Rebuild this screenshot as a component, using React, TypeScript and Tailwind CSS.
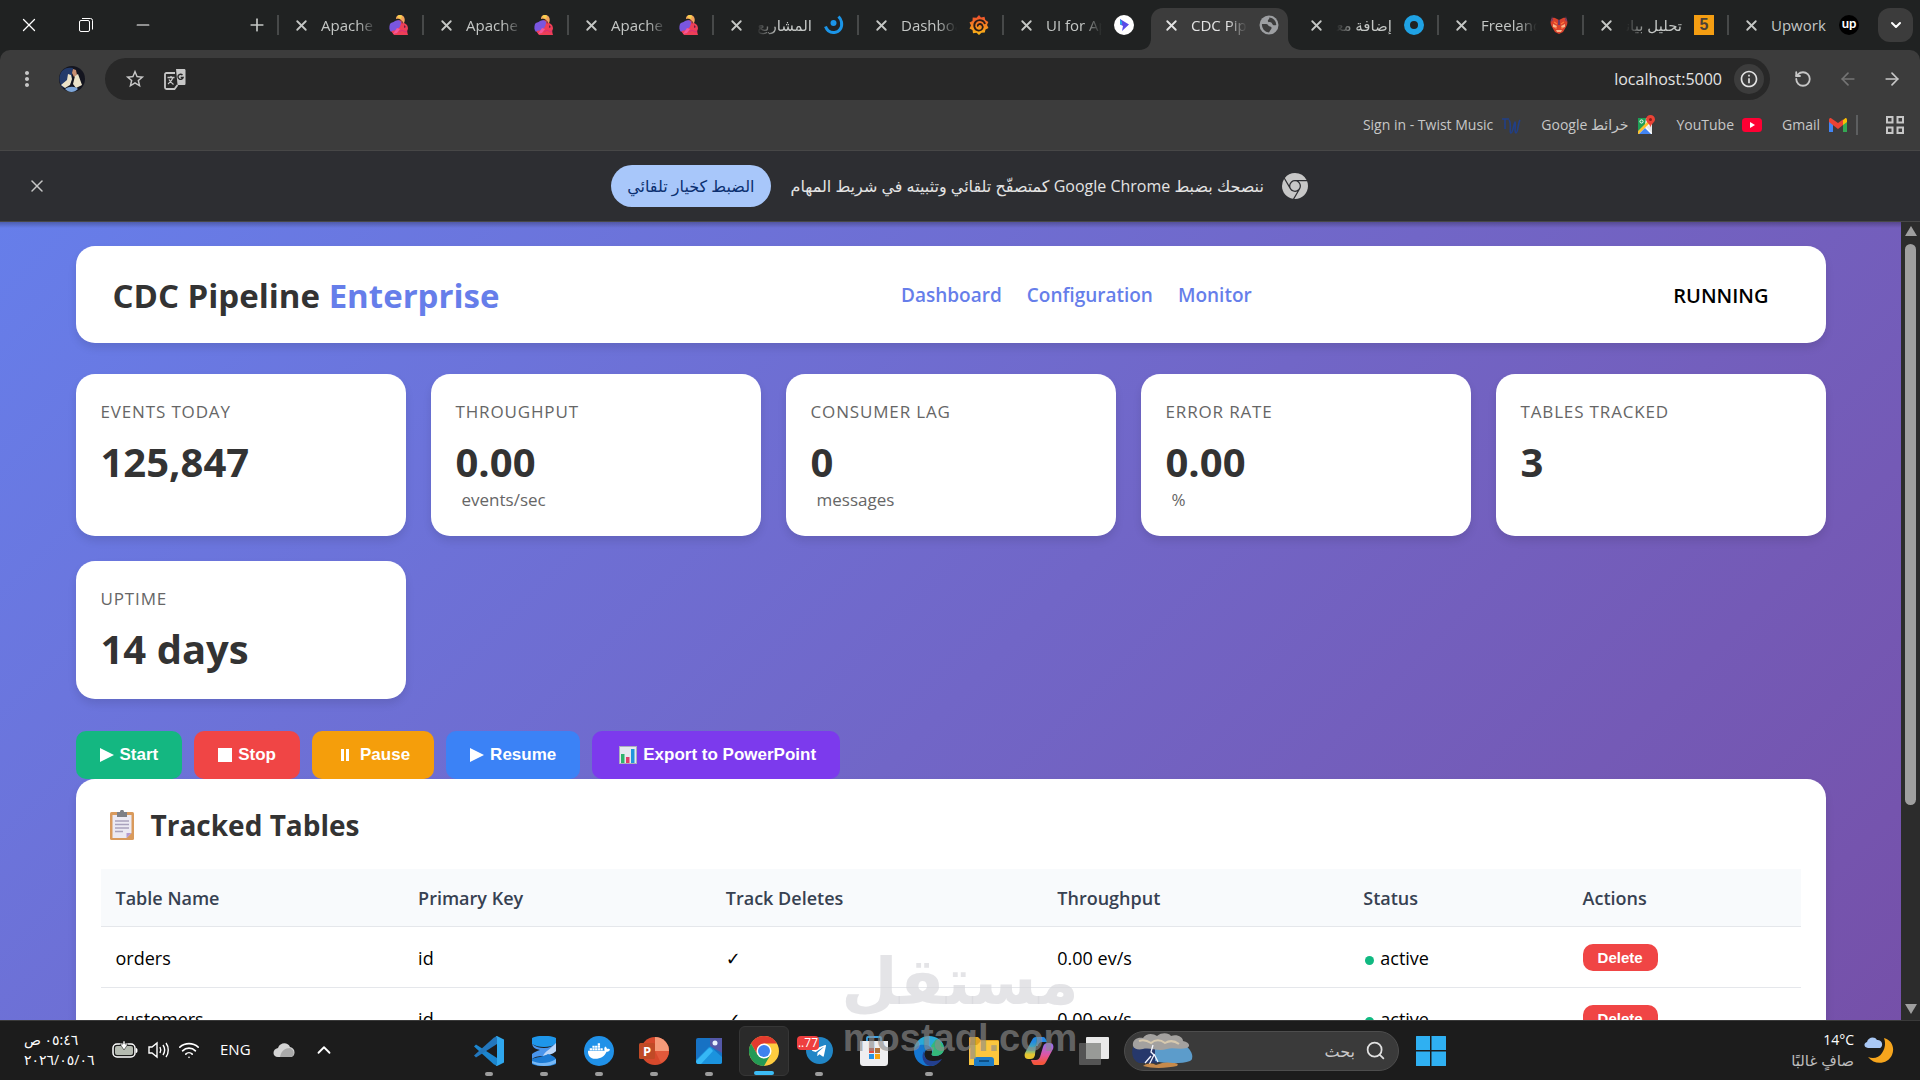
import type { ReactNode } from 'react'
import { ArrowLeft, ArrowRight, ChevronDown, ChevronUp, Minus, Plus, RotateCcw, Search, Wifi, X } from 'lucide-react'
import { FaDocker, FaTelegramPlane } from 'react-icons/fa'
import { MdInfoOutline, MdMoreVert, MdStarBorder } from 'react-icons/md'
import { SiGooglechrome } from 'react-icons/si'

/* ---------- favicons ---------- */

function ApacheIcon() {
  return (
    <svg viewBox="0 0 20 20" className="size-5">
      <path d="M8 6c3-2 6 0 7 2 3 1 4 3 4 6-1 1-1 3 0 6H5l-3-4c0-5 2-8 6-10z" fill="#ee3f57" />
      <path d="M1 9c1-2 3-1 5-3 2-1 5-1 6 1 0 4-2 7-5 8-2 1-4 0-5 2-2-2-2-5-1-8z" fill="#7a56e0" />
      <path d="M7 3c1-4 6-4 8-1 1 2 1 4 0 6l-3-1c1-2-1-4-5-3z" fill="#f2a35c" />
      <path d="M8 2c2-3 4-2 5-1l-1 3z" fill="#f6d04d" />
      <path d="M4 19l4-6 3 1-3 4z" fill="#f4569b" />
      <path d="M12 5l2 2-1 2zM15 10l2 2-2 1z" fill="#6b1f42" />
      <path d="M10 17l3-2 3 2 2-1" fill="none" stroke="#d92d7c" />
    </svg>
  )
}

function MostaqlIcon() {
  return (
    <svg viewBox="0 0 20 20" className="size-5" fill="none" stroke="#1b95e8" strokeWidth="3">
      <circle cx="9.500" cy="8" r="3" fill="#1b95e8" stroke="none" />
      <path d="M1.500 11.500c1.500 4 5 6.500 9 6 5-.5 8-5 7-10.500-.5-2.500-1.500-4-3-5.500" />
    </svg>
  )
}

function GrafanaIcon() {
  return (
    <svg viewBox="0 0 20 20" className="size-5">
      <defs>
        <linearGradient id="grafana" x1="0" y1="0" x2="0" y2="1">
          <stop offset="0" stopColor="#ee4a2e" />
          <stop offset="1" stopColor="#f9b716" />
        </linearGradient>
      </defs>
      <path d="M10 0l2 2.500 3.500-.8.800 3.300 3 2-1.300 3 1.500 3-3 1.500-.7 3-3.300.2L10 20l-2.500-2.200-3.500.5-.5-3.300-3-1.500L2 10.500.5 7.500 3.500 6l.2-3.500 3.800.2z" fill="url(#grafana)" />
      <path d="M16 9c-1-4-6-5-9-2.500-3 3-2 8 2 9 4 .5 6-3 4-5.500-2-2-5-.5-4 1.500" fill="none" stroke="#2a1c18" strokeWidth="1.800" />
    </svg>
  )
}

function ApiIcon() {
  return (
    <svg viewBox="0 0 20 20" className="size-5">
      <circle cx="10" cy="10" r="10" fill="#fff" />
      <path d="M6 4l9 5.500L8 16l1-5-3-1.500z" fill="#5a4de8" />
      <path d="M6 4l2 3v3l-2-1z" fill="#2aa8e8" />
    </svg>
  )
}

function GlobeIcon() {
  return (
    <svg viewBox="0 0 20 20" className="size-5">
      <circle cx="10" cy="10" r="9.500" fill="#9d9fa2" />
      <path d="M3 9h4c2 0 2 2 4 2.500 2 .5 2 2 .5 3.500L10 17.500A7.500 7.500 0 0 1 3 9zM10 2.500c1.500 1.500-2 2-1 4 1 1.500 3 0 4 2s2 2 4.300 1.500A7.500 7.500 0 0 0 10 2.500z" fill="#3c3c3c" />
    </svg>
  )
}

function RingIcon() {
  return (
    <svg viewBox="0 0 20 20" className="size-5">
      <circle cx="10" cy="10" r="7" fill="#202222" stroke="#1fa2e4" strokeWidth="6" />
    </svg>
  )
}

function MaskIcon() {
  return (
    <svg viewBox="0 0 20 20" className="size-5">
      <path d="M2 5c1-3 3-2 4-2l4 2 4-2c1 0 3-1 4 2 1 3 0 5-1 7l-3 5-4 2-4-2-3-5C2 10 1 8 2 5z" fill="#d9412c" />
      <path d="M4 9l4 2-1 2-3-1zM16 9l-4 2 1 2 3-1zM7 15h6l-1 2H8z" fill="#f8b68a" />
      <path d="M3 1l1 4-2 2zM17 1l-1 4 2 2zM9 5h2v5H9z" fill="#6b3a6e" />
      <path d="M5 7l3 2M15 7l-3 2M7 12v2M13 12v2" stroke="#ff7a3c" strokeWidth="1.200" />
    </svg>
  )
}

function FiveIcon() {
  return (
    <span className="flex size-5 items-center justify-center bg-[#f59e12] font-['Liberation_Sans'] text-base font-bold text-[#4a4038]">5</span>
  )
}

function UpworkIcon() {
  return (
    <span className="flex size-5 items-center justify-center rounded-full bg-black pb-0.5 font-['Lato'] text-[13px] font-bold text-white">up</span>
  )
}

/* ---------- bookmarks ---------- */

function TwistIcon() {
  return (
    <svg viewBox="0 0 20 20" className="size-5" fill="none" stroke="#213f86" strokeWidth="1.600">
      <path d="M1 4h7M4 4v10M8 5c3 4 0 13 2 13s3-11 4-11-1 11 1 11 2-10 4-13" />
    </svg>
  )
}

function MapsIcon() {
  return (
    <svg viewBox="0 0 20 20" className="size-5">
      <path d="M2 3h14v16H2z" fill="#fff" />
      <path d="M2 3h8l-1 7-7 7z" fill="#1e9e55" />
      <path d="M2 16L13 5l2 2L3 19H2z" fill="#fbc02d" />
      <path d="M3 19l6-6 6 6z" fill="#4285f4" />
      <path d="M10 12l6 6V9z" fill="#e6e8ea" />
      <circle cx="5.500" cy="6.500" r="1.600" fill="none" stroke="#fff" />
      <path d="M14.500 0a4.500 4.500 0 0 1 4.500 4.500c0 3-4 4-4.500 8-.5-4-4.500-5-4.500-8A4.500 4.500 0 0 1 14.500 0z" fill="#ea4335" />
      <circle cx="14.500" cy="4.500" r="1.500" fill="#8c1d18" />
    </svg>
  )
}

function YouTubeIcon() {
  return (
    <svg viewBox="0 0 20 20" className="size-5">
      <rect y="3" width="20" height="14" rx="3.500" fill="#ff0033" />
      <path d="M8 7l5 3-5 3z" fill="#fff" />
    </svg>
  )
}

function GmailIcon() {
  return (
    <svg viewBox="0 0 20 20" className="size-5">
      <path d="M1 5v12h4V8z" fill="#4285f4" />
      <path d="M19 5v12h-4V8z" fill="#34a853" />
      <path d="M15 5l2-1.500c1-1 2 0 2 1.500v2l-4 3z" fill="#fbbc04" />
      <path d="M1 7V5c0-1.500 1-2.500 2.500-1.500L10 8l5-3.500V10l-5 4z" fill="#ea4335" />
    </svg>
  )
}

/* ---------- taskbar icons ---------- */

function VsCodeIcon() {
  return (
    <svg viewBox="0 0 30 30" className="size-[30px]">
      <path d="M2 8.500L0 10.500l20 18 3 1V22z" fill="#1c86cf" />
      <path d="M2 21.500L0 19.500 20 1.500l3-1V8z" fill="#2377bd" />
      <path d="M21 .5l2-.5 7 3.500v23L23 30l-2-.5c1 0 2-.5 2-2v-25c0-1.500-1-2-2-2z" fill="#2fa7ee" />
    </svg>
  )
}

function RibbonIcon() {
  return (
    <svg viewBox="0 0 30 30" className="size-[30px]">
      <path d="M3 2c6-3 18-3 24 0v6c-6 4-18 4-24 0z" fill="#1e96ea" />
      <path d="M3 8c4 3 8 4 12 4 5 0 9-2 12-5v8c-3 3-8 4-13 5-5 0-9 1-11 3v-5c2-2 5-3 8-4-4-1-7-2-8-6z" fill="#4a95ec" />
      <path d="M27 7v8c-3 3-7 4-13 5 2-5 8-7 13-13z" fill="#bcd6f8" />
      <path d="M3 23c5-2 11-2 16-5 4 1 7 3 8 5v5c-6 3-18 3-24 0z" fill="#1c7bd4" />
      <path d="M3 25c7 3 17 3 24-2v4c-6 4-18 4-24 0z" fill="#76b7f5" />
    </svg>
  )
}

function DockerIcon() {
  return (
    <span className="flex size-[30px] items-center justify-center rounded-full bg-[#2091e8] text-white">
      <FaDocker size={22} />
    </span>
  )
}

function PowerPointIcon() {
  return (
    <span className="relative block size-[30px]">
      <svg viewBox="0 0 30 30" className="size-[30px]">
        <circle cx="16" cy="15" r="14" fill="#d6492c" />
        <path d="M16 1a14 14 0 0 1 14 14H16z" fill="#f59a79" />
        <path d="M16 15h14a14 14 0 0 1-8 12z" fill="#e2583a" />
        <rect y="7" width="16" height="16" rx="1.500" fill="#c04a26" />
      </svg>
      <span className="absolute top-[7px] left-0 w-4 text-center font-['Open_Sans'] text-[13px] leading-4 font-bold text-white">P</span>
    </span>
  )
}

function PhotosIcon() {
  return (
    <svg viewBox="0 0 30 30" className="size-[30px]">
      <rect x="2" y="2" width="26" height="26" rx="2" fill="#1772c4" />
      <path d="M16 2h12v15L16 10z" fill="#5458a8" />
      <path d="M2 24L14 12c2-2 3-1 4 0l10 9v5c0 1-1 2-2 2H6z" fill="#1b93de" />
      <path d="M2 25L14 13c2-2 3-1 5 2L7 28H4c-1 0-2-1-2-3z" fill="#36b8f6" />
      <circle cx="21" cy="7" r="2.500" fill="#e9f2fb" />
    </svg>
  )
}

function ChromeIcon() {
  return (
    <svg viewBox="0 0 30 30" className="size-[30px]">
      <circle cx="15" cy="15" r="15" fill="#ffcd40" />
      <path d="M2 7.500A15 15 0 0 1 28 7.500H15L8.500 18.700z" fill="#e33b2e" />
      <path d="M2 7.500A15 15 0 0 0 15 30l6.500-11.200H8.500z" fill="#249a55" />
      <circle cx="15" cy="15" r="7.500" fill="#fff" />
      <circle cx="15" cy="15" r="6" fill="#3d82ee" />
    </svg>
  )
}

function TelegramIcon() {
  return (
    <span className="relative flex size-[30px] items-center justify-center">
      <span className="flex size-[27px] items-center justify-center rounded-full bg-[#2186c6] text-white">
        <FaTelegramPlane size={16} />
      </span>
      <span className="absolute top-0 right-[15px] rounded bg-[#ee3f3f] px-px font-['Open_Sans'] text-xs leading-3.5 text-white">..77</span>
    </span>
  )
}

function StoreIcon() {
  return (
    <svg viewBox="0 0 30 30" className="size-[30px]">
      <path d="M8 6V2c0-1 0-1 1-1h12c1 0 1 0 1 1v4" fill="none" stroke="#3ba4e6" strokeWidth="1.800" />
      <path d="M1 5h28v21c0 3-1 4-4 4H5c-3 0-4-1-4-4z" fill="#eeeef0" />
      <path d="M10 12h5v5h-5z" fill="#e25041" />
      <path d="M16 12h5v5h-5z" fill="#b0713a" />
      <path d="M10 18h5v5h-5z" fill="#2694e4" />
      <path d="M16 18h5v5h-5z" fill="#f8a50e" />
    </svg>
  )
}

function EdgeIcon() {
  return (
    <svg viewBox="0 0 30 30" className="size-[30px]">
      <path d="M0 15C0 6 7 0 15 0s15 5 15 12c0 5-4 8-9 8-3 0-4-1-3-3 1-6-5-9-10-7-4 1-7 3-8 5z" fill="#2aa9d8" />
      <path d="M22 3c5 2 8 6 8 10 0 4-4 7-9 7-3 0-4-1-3-3 2-3 0-5-1-7z" fill="#35b979" />
      <path d="M0 15c1-5 6-7 11-6 3 0 5 2 6 4-5-1-8 4-6 8 2 5 7 8 12 7-3 2-6 2-9 2C6 30 0 23 0 15z" fill="#1577d2" />
      <path d="M11 14c-3 5 1 12 9 11 3 0 5-1 8-2-3 5-8 7-12 7-7-1-10-11-5-16z" fill="#233f8f" />
    </svg>
  )
}

function FolderIcon() {
  return (
    <svg viewBox="0 0 30 30" className="size-[30px]">
      <path d="M0 2c0-1 1-1 1-1h8l3 3h17c1 0 1 1 1 2v8H0z" fill="#e2a321" />
      <path d="M0 9h8l4-4h17c1 0 1 1 1 2v22H0z" fill="#fbc63e" />
      <path d="M5 30v-6c0-2 1-3 3-3h14c2 0 3 1 3 3v6z" fill="#1d7bc4" />
      <path d="M10 25h10" stroke="#0c4f86" strokeWidth="2" />
    </svg>
  )
}

function CopilotIcon() {
  return (
    <svg viewBox="0 0 30 30" className="size-[30px]">
      <defs>
        <linearGradient id="copilotLeft" x1="0" y1="0" x2="0" y2="1">
          <stop offset="0.200" stopColor="#2188e6" />
          <stop offset="0.550" stopColor="#4fb0a8" />
          <stop offset="0.800" stopColor="#e6c62f" />
        </linearGradient>
        <linearGradient id="copilotRight" x1="0" y1="0" x2="0" y2="1">
          <stop offset="0.100" stopColor="#9d6be8" />
          <stop offset="0.550" stopColor="#e0569f" />
          <stop offset="0.900" stopColor="#f4553c" />
        </linearGradient>
      </defs>
      <path d="M8 4c1-2 2-3 4-3h7c2 0 3 2 4 5h-5c-2 0-3 1-4 3l-3 10c-1 3-2 4-5 4H4c-3 0-4-3-3-6z" fill="url(#copilotLeft)" />
      <path d="M22 26c-1 2-2 3-4 3h-7c-2 0-3-2-4-5h5c2 0 3-1 4-3l3-10c1-3 2-4 5-4h2c3 0 4 3 3 6z" fill="url(#copilotRight)" />
      <path d="M12 10h6l-2 9h-5z" fill="#1c1c1c" />
    </svg>
  )
}

function TaskViewIcon() {
  return (
    <svg viewBox="0 0 30 30" className="size-[30px]">
      <rect x="7" y="1" width="23" height="22" rx="1" fill="#e9e9e9" />
      <rect y="7" width="22" height="22" rx="1" fill="#545454" />
      <path d="M7 7h15v16H7z" fill="#989a97" />
    </svg>
  )
}

function WindowsIcon() {
  return (
    <svg viewBox="0 0 30 30" className="size-[30px]" fill="#2fb0f2">
      <path d="M0 1c0-1 0-1 1-1h13v14H0zM15.500 0H29c1 0 1 0 1 1v13H15.500zM0 15.500h14V30H1c-1 0-1 0-1-1zM15.500 15.500H30V29c0 1 0 1-1 1H15.500z" />
    </svg>
  )
}

function StormImage() {
  return (
    <svg viewBox="0 0 62 36" className="h-9 w-[62px]">
      <path d="M3 12h24v18H8C2 28-1 20 3 12z" fill="#26386b" />
      <path d="M24 12h30c8 6 9 14 5 16-8 3-24 3-35 0z" fill="#5c9ccb" />
      <path d="M2 13C1 7 6 4 12 5c3-5 10-5 14-2 5-4 12-3 14 0 6-2 12 1 12 5 6 1 8 5 4 7-8 2-14-1-20 1-9 3-17-2-24 0-5 1-9 0-10-3z" fill="#a3a19f" />
      <path d="M8 8c5-2 9 0 12 2 5-4 10-3 14 0 5-3 10-2 14 1" fill="none" stroke="#d7c9ae" strokeWidth="2" />
      <path d="M22 12l-2 7 3 3-5 10M23 21l4 8M20 23l-6 7" fill="none" stroke="#f4f6ff" strokeWidth="1.300" />
      <path d="M12 33c5-3 9-3 13-1 7-3 12-3 17-2 4 0 6 1 4 3-9 2-24 3-34 0z" fill="#c68a4b" />
    </svg>
  )
}

function MoonIcon() {
  return (
    <svg viewBox="0 0 30 30" className="size-[30px]">
      <path d="M20 3c8 2 11 10 8 17-4 9-17 11-24 2 5 2 11 1 14-4 3-4 4-10 2-15z" fill="#f6a51d" />
      <path d="M4 13c-4 0-5-5-1-6 1-5 8-6 10-2 5-1 7 6 3 8z" fill="#a9c8f5" />
    </svg>
  )
}

/* ---------- data ---------- */

type Tab = { title: string; icon: ReactNode; rtl?: boolean; active?: boolean; divider?: boolean }

const tabs: Tab[] = [
  { title: 'Apache Kafka', icon: <ApacheIcon />, divider: true },
  { title: 'Apache Kafka', icon: <ApacheIcon />, divider: true },
  { title: 'Apache Kafka', icon: <ApacheIcon />, divider: true },
  { title: 'المشاريع', icon: <MostaqlIcon />, rtl: true, divider: true },
  { title: 'Dashboards', icon: <GrafanaIcon />, divider: true },
  { title: 'UI for Apache', icon: <ApiIcon />, divider: true },
  { title: 'CDC Pipeline', icon: <GlobeIcon />, active: true },
  { title: 'إضافة معرض', icon: <RingIcon />, rtl: true },
  { title: 'Freelancer', icon: <MaskIcon />, divider: true },
  { title: 'تحليل بيانات', icon: <FiveIcon />, rtl: true, divider: true },
  { title: 'Upwork', icon: <UpworkIcon />, divider: true },
]

const bookmarks = [
  { label: 'Sign in - Twist Music', icon: <TwistIcon /> },
  { label: 'Google خرائط', icon: <MapsIcon /> },
  { label: 'YouTube', icon: <YouTubeIcon /> },
  { label: 'Gmail', icon: <GmailIcon /> },
]

const stats = [
  { label: 'Events Today', value: '125,847' },
  { label: 'Throughput', value: '0.00', unit: 'events/sec' },
  { label: 'Consumer Lag', value: '0', unit: 'messages' },
  { label: 'Error Rate', value: '0.00', unit: '%' },
  { label: 'Tables Tracked', value: '3' },
  { label: 'Uptime', value: '14 days' },
]

const columns = [
  { title: 'Table Name', width: 'w-[17.8%]' },
  { title: 'Primary Key', width: 'w-[18.1%]' },
  { title: 'Track Deletes', width: 'w-[19.5%]' },
  { title: 'Throughput', width: 'w-[18%]' },
  { title: 'Status', width: 'w-[12.9%]' },
  { title: 'Actions', width: 'w-[13.7%]' },
]

const rows = ['orders', 'customers']

const apps = [
  { name: 'Visual Studio Code', icon: <VsCodeIcon />, open: true },
  { name: 'Database', icon: <RibbonIcon />, open: true },
  { name: 'Docker', icon: <DockerIcon />, open: true },
  { name: 'PowerPoint', icon: <PowerPointIcon />, open: true },
  { name: 'Photos', icon: <PhotosIcon />, open: true },
  { name: 'Chrome', icon: <ChromeIcon />, open: true, active: true },
  { name: 'Telegram', icon: <TelegramIcon />, open: true },
  { name: 'Store', icon: <StoreIcon /> },
  { name: 'Edge', icon: <EdgeIcon />, open: true },
  { name: 'Files', icon: <FolderIcon /> },
  { name: 'Copilot', icon: <CopilotIcon /> },
  { name: 'Task view', icon: <TaskViewIcon /> },
]

/* ---------- browser ---------- */

function TabItem({ tab }: { tab: Tab }) {
  return (
    <div className={`relative flex h-[42px] w-[145px] items-center pb-2 ${tab.active ? 'text-[#e3e3e3]' : 'text-[#c4c7c5]'}`}>
      {tab.active && (
        <svg viewBox="0 0 163 42" className="absolute top-0 -left-2 h-[42px] w-[163px]" fill="#3c3c3c">
          <path d="M0 42c8 0 12-5 12-12V12C12 5 17 0 24 0h113c7 0 12 5 12 12v18c0 7 6 12 14 12z" />
        </svg>
      )}
      <span className={`h-5 w-0.5 shrink-0 ${tab.divider ? 'bg-[#474949]' : ''}`} />
      <button aria-label="Close tab" className="relative ml-3 flex size-5 shrink-0 items-center justify-center">
        <X size={17} strokeWidth={2.6} />
      </button>
      <span
        dir={tab.rtl ? 'rtl' : 'ltr'}
        className={`relative ml-2.5 w-14 shrink-0 overflow-hidden whitespace-nowrap text-[15px] leading-6 ${
          tab.rtl
            ? '[mask-image:linear-gradient(to_left,#000_60%,transparent)]'
            : tab.title === 'Upwork' ? '' : '[mask-image:linear-gradient(to_right,#000_65%,transparent)]'
        }`}
      >
        {tab.title}
      </span>
      <span className="relative ml-3 shrink-0">{tab.icon}</span>
    </div>
  )
}

function TabStrip() {
  return (
    <div className="flex h-[50px] items-start bg-[#202222] pt-2 text-white">
      <div className="flex h-[34px] flex-1 items-center">
        <button aria-label="Close" className="flex w-[57px] items-center justify-center"><X size={22} strokeWidth={1.4} /></button>
        <button aria-label="Restore" className="flex w-[57px] items-center justify-center">
          <svg viewBox="0 0 14 14" className="size-3.5" fill="none" stroke="currentColor">
            <rect x="0.500" y="2.500" width="10" height="11" rx="1.500" />
            <path d="M3 .5h8.500a2 2 0 0 1 2 2v9" />
          </svg>
        </button>
        <button aria-label="Minimize" className="flex w-[57px] items-center justify-center"><Minus size={20} strokeWidth={1.4} /></button>
        <button aria-label="New tab" className="mr-2 ml-auto flex size-6 items-center justify-center text-[#c4c7c5]"><Plus size={20} /></button>
      </div>
      {tabs.map((tab, i) => <TabItem key={i} tab={tab} />)}
      <button aria-label="Search tabs" className="mr-[7px] ml-1.5 flex h-[34px] w-[35px] items-center justify-center rounded-xl bg-[#3c3c3c]">
        <ChevronDown size={16} strokeWidth={3} />
      </button>
    </div>
  )
}

function TranslateIcon() {
  return (
    <svg viewBox="0 0 22 22" className="size-[22px]">
      <path d="M11 5H2.500C1.500 5 1 5.500 1 6.500v13c0 1 .5 1.500 1.500 1.500h8l3-4" fill="none" stroke="currentColor" strokeWidth="1.800" />
      <path d="M3.500 9.500h7M7 8v1.500M9 9.500c-1 3-3 5-5 6.500M5 11.500c1 2 2.500 3.500 4.500 5" fill="none" stroke="currentColor" strokeWidth="1.300" />
      <path d="M12 1h8c1 0 1.500.5 1.500 1.500v13c0 1-.5 1.500-1.500 1.500h-6.500z" fill="currentColor" />
      <path d="M18.500 7a2.600 2.600 0 1 0 .6 2.500h-2.400" fill="none" stroke="#282828" strokeWidth="1.400" />
    </svg>
  )
}

function Toolbar() {
  return (
    <div className="bg-[#202222]">
      <div className="rounded-t-[10px] bg-[#3c3c3c] text-[#c7c7c7]">
        <div className="flex h-[58px] items-center pr-[18px] pl-[15px]">
          <button aria-label="Menu"><MdMoreVert size={24} /></button>
          <svg viewBox="0 0 26 26" className="ml-5 size-[26px]">
            <circle cx="13" cy="13" r="13" fill="#14151f" />
            <path d="M3 5C-1 10 0 18 4 22l8-6 2-14C9 1 6 2 3 5z" fill="#233a6b" />
            <path d="M14 3l3 1 1 5-3 2-2-4z" fill="#c98f72" />
            <path d="M2 19l6-5 1-6 3 1 1 4-2 6-5 3zM14 18l2-8 3-2 4 11-6 3z" fill="#ece3c9" />
            <path d="M6 23c4-3 10-3 13 0-4 4-9 4-13 0z" fill="#7ea6d8" />
          </svg>
          <div className="ml-5 flex h-[42px] flex-1 items-center rounded-full bg-[#282828] pr-1.5 pl-[19px]">
            <button aria-label="Bookmark"><MdStarBorder size={22} /></button>
            <button aria-label="Translate" className="ml-[18px]"><TranslateIcon /></button>
            <input aria-label="Address" defaultValue="localhost:5000" className="mr-3 min-w-0 flex-1 bg-transparent text-right text-base text-[#e3e3e3]" />
            <button aria-label="Site information" className="flex size-[30px] items-center justify-center rounded-full bg-[#3c3c3c] text-[#e3e3e3]">
              <MdInfoOutline size={20} />
            </button>
          </div>
          <button aria-label="Reload" className="ml-6"><RotateCcw size={18} strokeWidth={2.4} /></button>
          <button aria-label="Back" className="ml-[26px] text-[#747474]"><ArrowLeft size={20} /></button>
          <button aria-label="Forward" className="ml-6"><ArrowRight size={20} /></button>
        </div>
        <div className="flex h-[42px] items-center justify-end gap-5 pr-4 pb-2 text-sm">
          {bookmarks.map((b) => (
            <a key={b.label} href="#" className="flex items-center gap-2">{b.label}{b.icon}</a>
          ))}
          <span className="-ml-3 h-5 w-0.5 bg-[#5d5f60]" />
          <svg viewBox="0 0 18 18" className="ml-2 size-[18px]" fill="none" stroke="currentColor" strokeWidth="2">
            <path d="M1 1h5.500v5.500H1zM11.500 1H17v5.500h-5.500zM1 11.500h5.500V17H1zM11.500 11.500H17V17h-5.500z" />
          </svg>
        </div>
      </div>
    </div>
  )
}

function InfoBar() {
  return (
    <div className="flex h-[72px] items-center border-y border-[#474747] bg-[#2d2e32] text-base text-[#e3e3e3]">
      <button aria-label="Dismiss" className="ml-[27px] text-[#c7c7c7]"><X size={20} strokeWidth={1.8} /></button>
      <div className="flex flex-1 items-center justify-center pr-12">
        <button dir="rtl" className="mr-5 h-[42px] rounded-full bg-[#a8c7fa] px-4 text-[#0b2f70]">الضبط كخيار تلقائي</button>
        <span dir="rtl" className="mr-[18px]">ننصحك بضبط Google Chrome كمتصفّح تلقائي وتثبيته في شريط المهام</span>
        <SiGooglechrome size={26} color="#c7c7c7" />
      </div>
    </div>
  )
}

/* ---------- dashboard ---------- */

function ActionButton({ color, icon, children }: { color: string; icon: ReactNode; children: ReactNode }) {
  return (
    <button className={`flex h-12 items-center gap-1.5 rounded-[10px] px-6 font-['Liberation_Sans'] text-[17px] font-bold text-white ${color}`}>
      {icon}
      {children}
    </button>
  )
}

const playIcon = <svg viewBox="0 0 14 14" className="size-3.5" fill="currentColor"><path d="M0 0l14 7-14 7z" /></svg>
const stopIcon = <svg viewBox="0 0 14 14" className="size-3.5" fill="currentColor"><path d="M0 0h14v14H0z" /></svg>
const pauseIcon = <svg viewBox="0 0 18 14" className="h-3.5 w-[18px]" fill="currentColor"><path d="M5 1h3v12H5zM10 1h3v12h-3z" /></svg>
const chartIcon = (
  <svg viewBox="0 0 21 18" className="h-[18px] w-[21px]">
    <rect x="3.500" y="0.500" width="17" height="17" fill="#e6e9ef" stroke="#aab0bd" />
    <path d="M5 8h3.500v9H5z" fill="#2eb36c" />
    <path d="M10 11h3.500v6H10z" fill="#e03c68" />
    <path d="M15 3h3.500v14H15z" fill="#2194dd" />
  </svg>
)

function ClipboardIcon() {
  return (
    <svg viewBox="0 0 26 30" className="h-[30px] w-[26px]">
      <rect x="1" y="2" width="24" height="28" rx="1.500" fill="#d99a5c" />
      <path d="M3.500 5h19v18l-5 5h-14z" fill="#eceaf3" />
      <path d="M17.500 28v-5h5z" fill="#b59ad0" />
      <path d="M8 2h3c0-3 4-3 4 0h3v5H8z" fill="#7e8086" />
      <path d="M6 11h14M6 14.500h14M6 18h14M6 21.500h8" stroke="#a9a2bd" strokeWidth="1.300" />
    </svg>
  )
}

function Dashboard() {
  return (
    <div className="min-h-[1093px] bg-linear-135 from-[#667eea] to-[#764ba2] pt-6">
      <div className="mx-auto max-w-[1750px]">
        <header className="mb-[31px] flex h-[97px] items-center justify-between rounded-[19px] bg-white px-[37px] pt-0.5 shadow-[0_5px_8px_rgba(0,0,0,0.1)]">
          <h1 className="text-[33px] font-bold text-[#333]">CDC Pipeline <span className="text-[#667eea]">Enterprise</span></h1>
          <nav className="flex gap-[25px] text-[19px] font-semibold text-[#667eea]">
            <a href="#">Dashboard</a>
            <a href="#">Configuration</a>
            <a href="#">Monitor</a>
          </nav>
          <div className="px-5 text-xl font-semibold text-black">RUNNING</div>
        </header>

        <div className="grid grid-cols-5 gap-[25px]">
          {stats.map((s) => (
            <div key={s.label} className="rounded-[19px] bg-white px-[25px] pt-[26px] pb-6 shadow-[0_5px_8px_rgba(0,0,0,0.1)]">
              <div className="text-[17px] leading-6 tracking-wider text-[#666] uppercase">{s.label}</div>
              <div className="mt-3 text-[40px] leading-[52px] font-bold text-[#333]">{s.value}</div>
              {s.unit && <div className="pl-1.5 text-[17px] leading-6 text-[#666]">{s.unit}</div>}
            </div>
          ))}
        </div>

        <div className="mt-8 flex gap-3">
          <ActionButton color="bg-[#14b781]" icon={playIcon}>Start</ActionButton>
          <ActionButton color="bg-[#f04545]" icon={stopIcon}>Stop</ActionButton>
          <ActionButton color="bg-[#f59e0b]" icon={pauseIcon}>Pause</ActionButton>
          <ActionButton color="bg-[#3b82f6]" icon={playIcon}>Resume</ActionButton>
          <ActionButton color="bg-[#7c3aed]" icon={chartIcon}>Export to PowerPoint</ActionButton>
        </div>

        <section className="rounded-[19px] bg-white p-[25px] shadow-[0_5px_8px_rgba(0,0,0,0.1)]">
          <h2 className="mb-6 flex h-[41px] items-center gap-4 pl-2 text-[28px] font-bold text-[#333]">
            <ClipboardIcon />
            Tracked Tables
          </h2>
          <table className="w-full table-fixed text-left text-lg">
            <thead>
              <tr className="h-[57px] border-b border-[#e5e7eb] bg-[#f8fafc] text-[#374151]">
                {columns.map((c) => <th key={c.title} className={`px-[15px] pt-0.5 font-semibold ${c.width}`}>{c.title}</th>)}
              </tr>
            </thead>
            <tbody>
              {rows.map((name) => (
                <tr key={name} className="h-[61px] border-b border-[#e5e7eb] text-black *:px-[15px] *:pt-0.5">
                  <td>{name}</td>
                  <td>id</td>
                  <td>✓</td>
                  <td>0.00 ev/s</td>
                  <td>
                    <span className="mr-1.5 ml-0.5 inline-block size-[9px] rounded-full bg-[#10b981]" />
                    active
                  </td>
                  <td>
                    <button className="flex h-[27px] w-[75px] items-center justify-center rounded-[10px] bg-[#f04545] font-['Liberation_Sans'] text-[15px] font-bold text-white">
                      Delete
                    </button>
                  </td>
                </tr>
              ))}
            </tbody>
          </table>
        </section>
      </div>
    </div>
  )
}

function ScrollBar() {
  return (
    <div className="flex w-[19px] flex-col items-center bg-[#2c2c2c] py-1 text-[#9f9f9f]">
      <svg viewBox="0 0 12 10" className="h-2.5 w-3" fill="currentColor"><path d="M6 0l6 10H0z" /></svg>
      <div className="mt-2 h-[71%] w-[11px] rounded-full bg-[#9f9f9f]" />
      <svg viewBox="0 0 12 10" className="mt-auto mb-0.5 h-2.5 w-3" fill="currentColor"><path d="M6 10L0 0h12z" /></svg>
    </div>
  )
}

/* ---------- desktop ---------- */

function Taskbar() {
  return (
    <footer className="flex h-[60px] shrink-0 items-center border-t border-[#3a3a3a] bg-[#1c1c1c] text-white">
      <div className="flex flex-1 items-center pb-0.5">
        <div className="ml-6 w-[88px] text-sm leading-5">
          <div dir="rtl" className="w-fit">٠٥:٤٦ ص</div>
          <div>٢٠٢٦/٠٥/٠٦</div>
        </div>
        <svg viewBox="0 0 26 18" className="h-[18px] w-[26px]">
          <rect x="1" y="3" width="22" height="13" rx="4" fill="#1c1c1c" stroke="#fff" strokeWidth="1.500" />
          <rect x="3" y="5" width="18" height="9" rx="2" fill="#b4bab0" />
          <path d="M24 7c2 0 2 5 0 5z" fill="#fff" />
          <path d="M11 0h2v3h3l-4 6-4-6h3z" fill="#fff" stroke="#1c1c1c" strokeWidth="0.600" />
        </svg>
        <svg viewBox="0 0 22 18" className="ml-2.5 h-[18px] w-[22px]" fill="none" stroke="#fff" strokeWidth="1.400">
          <path d="M1 6h3l5-4v14l-5-4H1zM12 6c1 2 1 4 0 6M15 4c2 3 2 7 0 10M18 2c3 4 3 10 0 14" />
        </svg>
        <Wifi size={22} strokeWidth={1.8} className="ml-2" />
        <span className="ml-5 text-[15px]">ENG</span>
        <svg viewBox="0 0 22 14" className="ml-[22px] h-3.5 w-[22px]">
          <path d="M5 14C-1 14-1 6 5 5c2-6 10-6 12-1 6 1 6 10 0 10z" fill="#d4d4d4" />
          <path d="M7 14c1-6 5-9 10-9 5 2 5 9 0 9z" fill="#a9a9a9" />
        </svg>
        <ChevronUp size={22} className="ml-[18px]" />
      </div>

      <div className="ml-4 flex items-center gap-[5px]">
        {apps.map((a) => (
          <button
            key={a.name}
            aria-label={a.name}
            className={`relative flex size-[50px] items-center justify-center rounded-md ${a.active ? 'border border-[#363636] bg-[#2a2a2a]' : ''}`}
          >
            {a.icon}
            {a.open && (
              <span className={`absolute bottom-0 h-1 rounded-full ${a.active ? 'w-5 bg-[#3cbcf5]' : 'w-2 bg-[#9c9c9c]'}`} />
            )}
          </button>
        ))}
        <label className="flex h-10 w-[275px] items-center rounded-full border border-[#4d4d4d] bg-[#3a3a3a] pr-3 pl-1.5">
          <StormImage />
          <input aria-label="بحث" dir="rtl" placeholder="بحث" className="min-w-0 flex-1 bg-transparent pr-2.5 text-base placeholder:text-[#c9c9c9]" />
          <Search size={21} className="text-[#e0e0e0]" />
        </label>
        <button aria-label="Start" className="ml-3"><WindowsIcon /></button>
      </div>

      <div className="flex flex-1 items-center justify-end gap-2.5 pr-[26px] pb-0.5">
        <div className="text-right text-sm leading-5">
          <div>14°C</div>
          <div dir="rtl" className="text-left text-[15px] text-[#bdbdbd]">صافٍ غالبًا</div>
        </div>
        <MoonIcon />
      </div>
    </footer>
  )
}

function Watermark() {
  return (
    <div className="pointer-events-none absolute right-0 bottom-6 left-0 flex flex-col items-center font-bold">
      <span className="font-['DejaVu_Sans'] text-[65px] leading-[76px] text-[#d5d6da]/65">مستقل</span>
      <span className="font-['Liberation_Sans'] text-[38px] leading-9 text-[#8c8c8c]/65">mostaql.com</span>
    </div>
  )
}

export default function App() {
  return (
    <div className="relative flex h-screen flex-col overflow-hidden font-['Open_Sans','Noto_Sans','DejaVu_Sans',sans-serif]">
      <TabStrip />
      <Toolbar />
      <InfoBar />
      <main className="flex min-h-0 flex-1">
        <div className="relative min-w-0 flex-1 overflow-hidden">
          <Dashboard />
          <div className="absolute inset-x-0 top-0 h-1.5 bg-linear-to-b from-black/25 to-transparent" />
        </div>
        <ScrollBar />
      </main>
      <Taskbar />
      <Watermark />
    </div>
  )
}
